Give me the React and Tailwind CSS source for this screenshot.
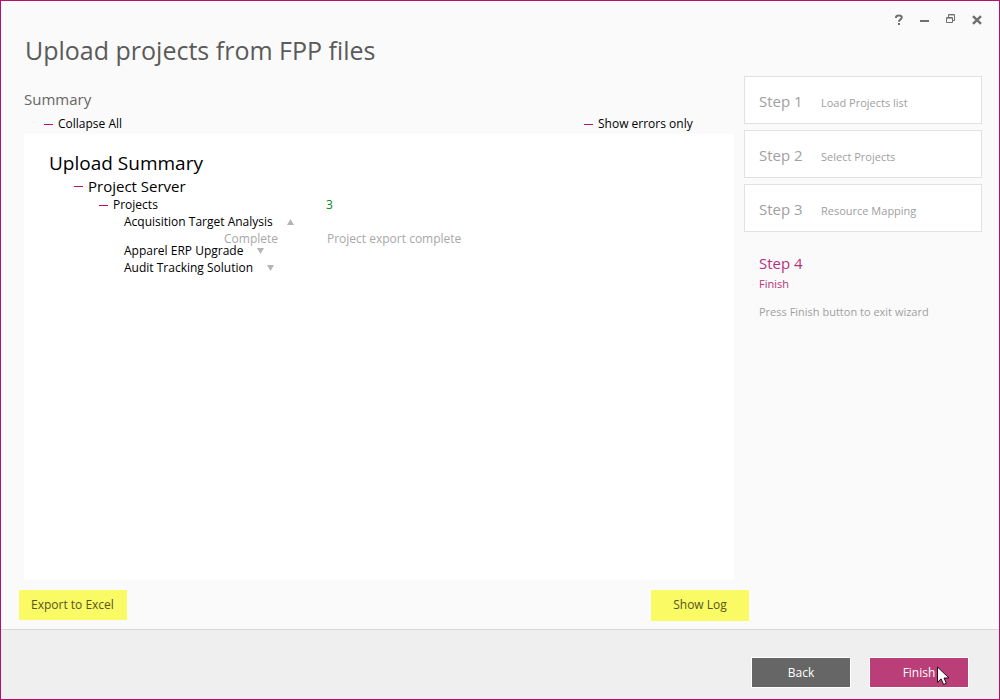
import { useState } from 'react';
import clsx from 'clsx';

const STEPS = [
  { id: 1, label: 'Load Projects list' },
  { id: 2, label: 'Select Projects' },
  { id: 3, label: 'Resource Mapping' },
];

const PROJECTS = [
  { name: 'Acquisition Target Analysis', status: 'Complete', message: 'Project export complete' },
  { name: 'Apparel ERP Upgrade', status: 'Complete', message: 'Project export complete' },
  { name: 'Audit Tracking Solution', status: 'Complete', message: 'Project export complete' },
];

function Dash({ className }) {
  return <span className={clsx('h-px w-[9px] shrink-0 bg-[#b5106c]', className)} />;
}

function WindowControls() {
  return (
    <div className="flex h-9 items-center justify-end gap-3 pt-[2px] pr-[15px] text-[#6f6f6f]">
      <button aria-label="Help" className="flex size-[14px] items-center justify-center">
        <svg width="14" height="14" viewBox="0 0 14 14" fill="none" stroke="currentColor" strokeWidth="2">
          <path d="M4 5V4.5C4 3 5 2.6 6.8 2.6S9.8 3.2 9.8 4.6C9.8 6.4 7 6.4 7 8.8" />
          <path d="M7 10v2" />
        </svg>
      </button>
      <button aria-label="Minimize" className="flex size-[14px] items-center justify-center">
        <svg width="14" height="14" viewBox="0 0 14 14" fill="currentColor">
          <path d="M2 7h9v2H2z" />
        </svg>
      </button>
      <button aria-label="Restore" className="flex size-[14px] items-center justify-center">
        <svg width="14" height="14" viewBox="0 0 14 14" fill="none" stroke="currentColor">
          <path d="M4.5 4V1.5h6v6H9" />
          <path d="M4 2.5h7" strokeOpacity=".4" />
          <path d="M2.5 4.5h6v5h-6z" />
          <path d="M2 5.5h7" strokeOpacity=".6" />
        </svg>
      </button>
      <button aria-label="Close" className="flex size-[14px] items-center justify-center">
        <svg width="14" height="14" viewBox="0 0 14 14" fill="none" stroke="currentColor" strokeWidth="2.4">
          <path d="M3 3.2l8 7.6M11 3.2l-8 7.6" />
        </svg>
      </button>
    </div>
  );
}

function ProjectRow({ project, open, onToggle }) {
  return (
    <li>
      <button onClick={onToggle} aria-expanded={open} className="flex h-[17px] items-center gap-[14px] pl-[100px]">
        {project.name}
        <svg width="7" height="6" viewBox="0 0 7 6" fill="#b5b5b5">
          <path d={open ? 'M3.5 0L7 6H0z' : 'M0 0h7L3.5 6z'} />
        </svg>
      </button>
      {open && (
        <div className="flex h-3 pl-[200px] leading-[17px] text-[#a8a8a8]">
          <span className="w-[103px]">{project.status}</span>
          <span>{project.message}</span>
        </div>
      )}
    </li>
  );
}

export default function App() {
  const [openProject, setOpenProject] = useState(0);
  const [collapsed, setCollapsed] = useState(false);

  return (
    <div className="flex min-h-screen flex-col border border-[#b5106c] bg-[#fafafa] font-['Open_Sans','Noto_Sans',sans-serif] text-xs text-black">
      <header>
        <WindowControls />
        <h1 className="pb-3 pl-6 text-[25px] leading-[27px] text-[#5a5a5a]">Upload projects from FPP files</h1>
      </header>

      <main className="flex flex-1 gap-[10px] pr-[17px] pl-[23px]">
        <section className="flex flex-1 flex-col pt-[11px]">
          <h2 className="text-[15px] leading-6 text-[#666666]">Summary</h2>
          <div className="flex h-[23px] items-end justify-between pl-5 leading-5">
            <button onClick={() => setCollapsed(!collapsed)} className="flex items-center gap-[5px]">
              <Dash />
              Collapse All
            </button>
            <button className="flex w-[150px] items-center gap-[5px]">
              <Dash />
              Show errors only
            </button>
          </div>

          <div className="flex-1 bg-white pt-[15px]">
            <h3 className="pl-[25px] text-[19px] leading-7">Upload Summary</h3>
            <div className="flex h-[18px] items-center gap-[5px] pl-[50px] text-[15px]">
              <Dash />
              Project Server
            </div>
            {!collapsed && (
              <>
                <div className="flex h-[18px] items-end leading-4">
                  <div className="flex w-[302px] items-center gap-[5px] pl-[75px]">
                    <Dash />
                    Projects
                  </div>
                  <span className="text-[#008a17]">{PROJECTS.length}</span>
                </div>
                <ul>
                  {PROJECTS.map((p, i) => (
                    <ProjectRow
                      key={p.name}
                      project={p}
                      open={openProject === i}
                      onToggle={() => setOpenProject(openProject === i ? -1 : i)}
                    />
                  ))}
                </ul>
              </>
            )}
          </div>
        </section>

        <aside className="w-[238px] text-[11px] text-[#a0a0a0]">
          <ol className="flex flex-col gap-[6px]">
            {STEPS.map(s => (
              <li key={s.id} className="flex h-12 items-baseline border border-[#e1e1e1] bg-white pt-[14px] pl-[14px]">
                <span className="w-[62px] text-[15px] leading-5">Step {s.id}</span>
                <span>{s.label}</span>
              </li>
            ))}
            <li className="pt-[14px] pl-[15px]">
              <div className="text-[15px] leading-[22px] text-[#b8307f]">Step 4</div>
              <div className="leading-5 text-[#b8307f]">Finish</div>
              <p className="pt-2 leading-5">Press Finish button to exit wizard</p>
            </li>
          </ol>
        </aside>
      </main>

      <div className="flex items-start justify-between pt-[10px] pr-[250px] pb-2 pl-[18px] text-[#55551f]">
        <button className="h-[30px] w-[108px] bg-[#fafa64] pl-3 text-left">Export to Excel</button>
        <button className="h-[31px] w-[98px] bg-[#fafa64] pb-px">Show Log</button>
      </div>

      <footer className="flex justify-end gap-[18px] border-t border-[#d8d8d8] bg-[#efefef] pt-[27px] pr-[30px] pb-[11px] text-white">
        <button className="h-[31px] w-[100px] border border-white bg-[#666666]">Back</button>
        <button className="relative h-[31px] w-[100px] border border-white bg-[#ba3e78]">
          Finish
          <svg className="absolute top-2 left-[67px]" width="13" height="20" viewBox="0 0 13 20">
            <path
              d="M.5 1v15.3l3.6-3.4 2.5 5.6 2.8-1.2-2.4-5.3h5z"
              fill="#ffffff"
              stroke="#1f0a16"
            />
          </svg>
        </button>
      </footer>
    </div>
  );
}
